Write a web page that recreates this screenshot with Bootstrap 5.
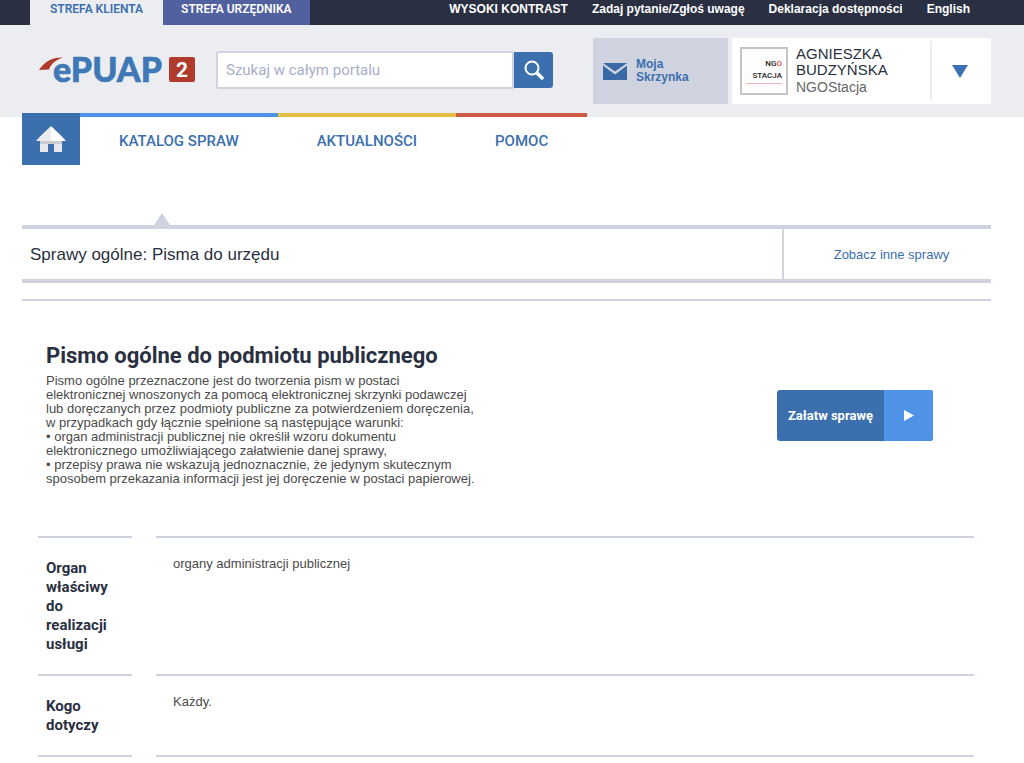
<!DOCTYPE html>
<html lang="pl">
<head>
<meta charset="utf-8">
<meta name="viewport" content="width=device-width, initial-scale=1">
<title>ePUAP – Pismo ogólne do podmiotu publicznego</title>
<link href="https://cdn.jsdelivr.net/npm/bootstrap@5.3.0/dist/css/bootstrap.min.css" rel="stylesheet">
<style>
  :root { --navy: #2a3041; --blue: #3b6fad; --sky: #4f93e6; --mist: #cfd3e0; --fog: #ecedf1; }
  body { font-family: "Liberation Sans", Arial, sans-serif; font-size: 13px; line-height: 14px; color: #4a4a4a; background: #fff; }
  a { text-decoration: none; color: var(--blue); }
  .rb { font-family: Roboto, sans-serif; }
  .page-x { padding-left: 22px; padding-right: 33px; }

  .topbar { background: var(--navy); height: 25px; padding-left: 30px; padding-right: 54px; }
  .zone { font-size: 12px; line-height: 18px; height: 25px; font-weight: 600; padding: 0 18px; }
  .zone-client { background: var(--fog); padding: 0 20px; }
  .zone-clerk { background: #5161a0; color: #fff; }
  .toplinks { gap: 24px; }
  .toplinks a { color: #fff; font-size: 12px; line-height: 18px; font-weight: 700; }

  .masthead { background: var(--fog); height: 92px; padding-top: 13px; }
  .brand { margin: 7px 20px 0 16px; }
  .search { margin-top: 13px; width: 337px; }
  .search .form-control { height: 38px; font-size: 15px; padding: 0 8px; border: 2px solid var(--mist); border-radius: 3px 0 0 3px; color: var(--navy); }
  .search .form-control::placeholder { color: #a6aec9; opacity: 1; }
  .search .btn { width: 39px; height: 36px; margin-top: 1px; background: var(--blue); border: 0; border-radius: 0 3px 3px 0; padding: 0; }
  .inbox { width: 135px; height: 66px; background: var(--mist); font-size: 12px; line-height: 13px; font-weight: 700; padding-left: 10px; gap: 9px; }
  .userbox { width: 259px; height: 66px; background: #fff; }
  .avatar { width: 48px; height: 48px; border: 2px solid #c4c4c4; margin: 0 8px; background: #fdfdfd; padding: 9px 4px 0 0; font: 500 8px/12px Roboto, sans-serif; color: #222; }
  .avatar em { font-style: normal; color: #e2483f; }
  .avatar hr { margin: 1px 0 0 4px; border-top: 1px solid #efb4b4; opacity: 1; }
  .username { color: var(--navy); font-size: 15px; line-height: 16px; }
  .userrole { color: #666; font-size: 14px; line-height: 18px; }
  .userbox .btn { width: 61px; height: 60px; border: 0; border-left: 2px solid var(--fog); border-radius: 0; padding: 0 3px 0 0; }

  .mainnav { margin-top: -4px; }
  .home { width: 58px; height: 52px; background: var(--blue); }
  .navitem { border-top: 4px solid; padding: 15px 39px 0; font-size: 15px; line-height: 18px; font-weight: 500; height: 52px; }
  .navitem a { color: var(--blue); }
  .edge-blue { border-color: var(--sky); }
  .edge-gold { border-color: #e2bf44; }
  .edge-red { border-color: #cd5b44; }

  .crumbs { margin-top: 60px; border-top: 4px solid var(--mist); border-bottom: 4px solid var(--mist); min-height: 58px; position: relative; }
  .crumbs::before { content: ""; position: absolute; left: 132px; top: -16px; border: 8px solid transparent; border-top: 0; border-bottom: 12px solid var(--mist); }
  .crumbs h1 { font-size: 17px; line-height: 20px; font-weight: 400; color: var(--navy); padding: 2px 0 0 8px; }
  .others { width: 209px; border-left: 2px solid var(--mist); padding: 2px 0 0 8px; }
  .rule { height: 2px; background: var(--mist); margin-top: 16px; }

  .service { padding: 41px 58px 0 24px; }
  .service h2 { font-size: 22px; line-height: 28px; font-weight: 700; color: var(--navy); margin: 0 0 4px; }
  .summary { width: 450px; }
  .start { height: 51px; margin-top: 48px; border: 0; border-radius: 3px; overflow: hidden; padding: 0; background: var(--blue); color: #fff; font-size: 13px; font-weight: 700; }
  .start .lbl { width: 107px; }
  .start .arr { width: 49px; background: var(--sky); }

  .facts { display: grid; grid-template-columns: 94px 1fr; column-gap: 24px; padding: 0 17px 0 16px; margin: 50px 0 0; }
  .facts dt, .facts dd { border-top: 2px solid var(--mist); margin: 0; }
  .facts dt { padding: 21px 20px 20px 8px; font-size: 15px; line-height: 19px; font-weight: 700; color: var(--navy); }
  .facts dd { padding: 19px 17px; }
</style>
</head>
<body>
<div class="topbar d-flex justify-content-between">
  <nav class="d-flex rb" aria-label="Strefy">
    <a class="zone zone-client" href="#">STREFA KLIENTA</a>
    <a class="zone zone-clerk" href="#">STREFA URZĘDNIKA</a>
  </nav>
  <nav class="toplinks d-flex" aria-label="Skróty">
    <a href="#">WYSOKI KONTRAST</a>
    <a href="#">Zadaj pytanie/Zgłoś uwagę</a>
    <a href="#">Deklaracja dostępności</a>
    <a href="#">English</a>
  </nav>
</div>

<header class="masthead page-x d-flex align-items-start">
  <a class="brand" href="#" aria-label="ePUAP 2">
    <svg class="d-block" width="158" height="50" viewBox="0 -12 158 50">
      <path d="M1 13C7 4 15 0 25 .5C17 3 13 7 11 12.500Z" fill="#b03a2c"/>
      <text x="15" y="25" font-family="Lato, sans-serif" font-size="34" font-weight="900" fill="#3f78b7" stroke="#3f78b7" stroke-width=".6" stroke-linejoin="round">ePUAP</text>
      <rect x="131" y="0" width="26" height="25" rx="2" fill="#b03a2c"/>
      <text x="144" y="20" text-anchor="middle" font-family="Roboto, sans-serif" font-size="21" font-weight="700" fill="#fff">2</text>
    </svg>
  </a>
  <form class="search d-flex" role="search">
    <input class="form-control rb" type="search" placeholder="Szukaj w całym portalu" aria-label="Szukaj w całym portalu">
    <button class="btn d-flex align-items-center justify-content-center flex-shrink-0" type="button" aria-label="Szukaj">
      <svg width="20" height="20" viewBox="0 0 20 20" fill="none" stroke="#fff"><circle cx="8" cy="8" r="6.500" stroke-width="2"/><path d="M13 13l5 5" stroke-width="3.500" stroke-linecap="round"/></svg>
    </button>
  </form>
  <div class="d-flex gap-1 ms-auto">
    <a class="inbox d-flex align-items-center" href="#">
      <svg width="24" height="17" viewBox="0 0 24 17" fill="#386aa6"><path d="M0 0h24L12 8.500z"/><path d="M0 2.500l12 9L24 2.500V17H0z"/></svg>
      <span>Moja<br>Skrzynka</span>
    </a>
    <div class="userbox d-flex align-items-center">
      <div class="avatar text-end flex-shrink-0">NG<em>O</em><br>STACJA<hr></div>
      <div><div class="username">AGNIESZKA<br>BUDZYŃSKA</div><div class="userrole">NGOStacja</div></div>
      <button class="btn ms-auto" type="button" aria-label="Menu użytkownika"><svg width="16" height="13" viewBox="0 0 16 13"><path d="M0 0h16L8 13z" fill="#3b70b5"/></svg></button>
    </div>
  </div>
</header>

<div class="page-x">
  <nav class="mainnav d-flex rb" aria-label="Menu główne">
    <a class="home d-flex align-items-center justify-content-center" href="#" aria-label="Strona główna">
      <svg width="30" height="28" viewBox="0 0 30 28"><path d="M4 14h8v13H4zM18 14h8v13h-8z" fill="#e6e7ea"/><path d="M4 16h22v3H4z" fill="#c9ccd2"/><path d="M15 1v15H0C4 11 10 6 15 1z" fill="#ececee"/><path d="M15 1c5 5 11 10 15 15H15z" fill="#fff"/></svg>
    </a>
    <div class="navitem edge-blue"><a href="#">KATALOG SPRAW</a></div>
    <div class="navitem edge-gold"><a href="#">AKTUALNOŚCI</a></div>
    <div class="navitem edge-red"><a href="#">POMOC</a></div>
  </nav>

  <div class="crumbs d-flex align-items-stretch">
    <h1 class="m-0 flex-grow-1 align-self-center">Sprawy ogólne: Pisma do urzędu</h1>
    <a class="others d-flex align-items-center justify-content-center" href="#">Zobacz inne sprawy</a>
  </div>
  <div class="rule"></div>

  <main>
    <section class="service d-flex justify-content-between align-items-start">
      <div class="summary">
        <h2 class="rb">Pismo ogólne do podmiotu publicznego</h2>
        <p class="m-0">Pismo ogólne przeznaczone jest do tworzenia pism w postaci<br>elektronicznej wnoszonych za pomocą elektronicznej skrzynki podawczej<br>lub doręczanych przez podmioty publiczne za potwierdzeniem doręczenia,<br>w przypadkach gdy łącznie spełnione są następujące warunki:<br>• organ administracji publicznej nie określił wzoru dokumentu<br>elektronicznego umożliwiającego załatwienie danej sprawy,<br>• przepisy prawa nie wskazują jednoznacznie, że jedynym skutecznym<br>sposobem przekazania informacji jest jej doręczenie w postaci papierowej.</p>
      </div>
      <button class="start btn rb d-flex align-items-stretch" type="button">
        <span class="lbl d-flex align-items-center justify-content-center">Załatw sprawę</span>
        <span class="arr d-flex align-items-center justify-content-center"><svg width="10" height="11" viewBox="0 0 10 11"><path d="M0 0l10 5.500L0 11z" fill="#fff"/></svg></span>
      </button>
    </section>

    <dl class="facts">
      <dt class="rb">Organ właściwy do realizacji usługi</dt>
      <dd>organy administracji publicznej</dd>
      <dt class="rb">Kogo dotyczy</dt>
      <dd>Każdy.</dd>
      <dt class="py-0" aria-hidden="true"></dt>
      <dd class="py-0" aria-hidden="true"></dd>
    </dl>
  </main>
</div>
<script src="https://cdn.jsdelivr.net/npm/bootstrap@5.3.0/dist/js/bootstrap.bundle.min.js"></script>
</body>
</html>
